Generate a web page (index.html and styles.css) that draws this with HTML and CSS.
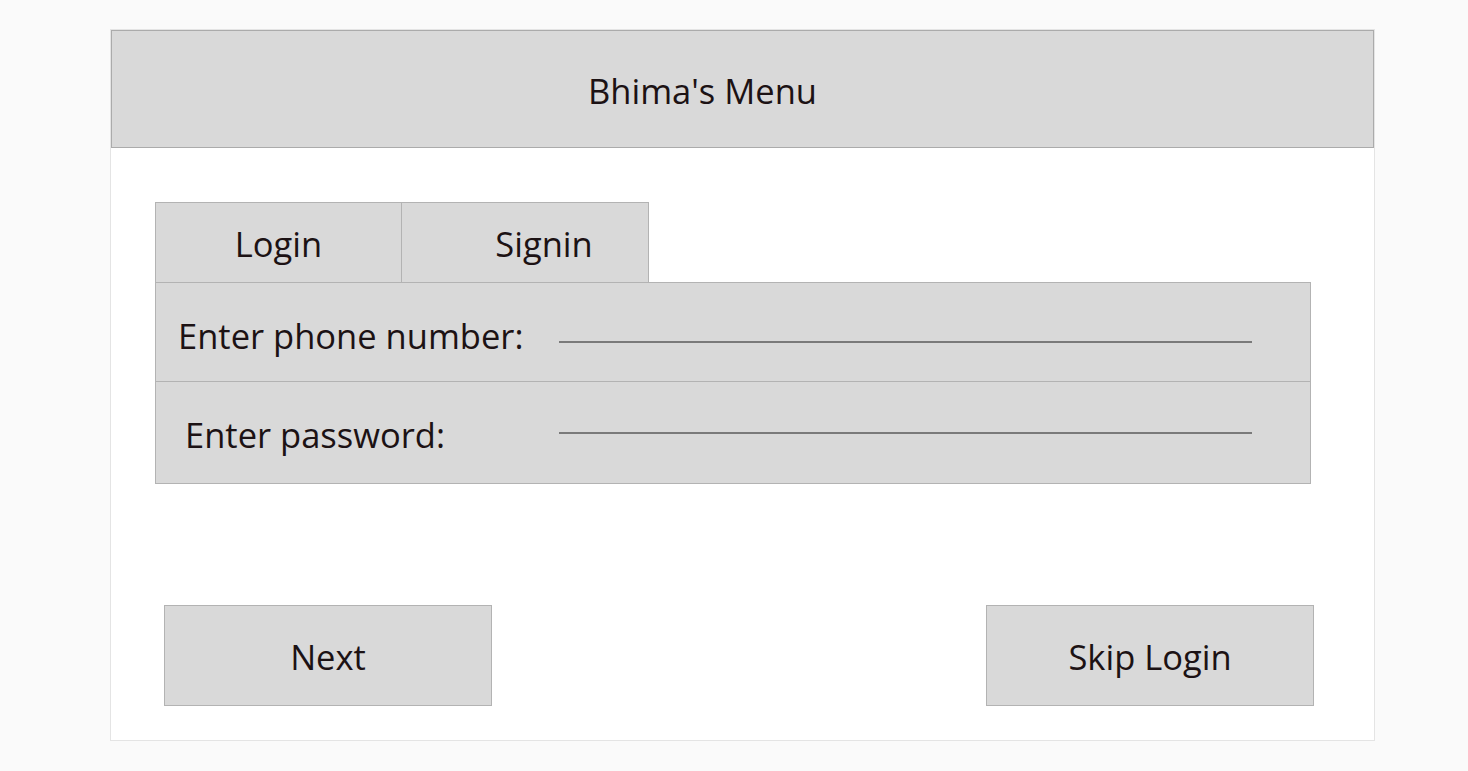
FILE: index.html
```html
<!DOCTYPE html>
<html lang="en">
<head>
<meta charset="utf-8">
<title>Bhima's Menu</title>
<link rel="stylesheet" href="styles.css">
</head>
<body>
<div class="card">
  <div class="header"><span class="title">Bhima's Menu</span></div>
  <div class="content">
    <div class="tabs">
      <div class="tab tab-login">Login</div>
      <div class="tab tab-signin">Signin</div>
    </div>
    <div class="form">
      <div class="row row-phone">
        <span class="label">Enter phone number:</span>
        <span class="line"></span>
      </div>
      <div class="row row-pass">
        <span class="label">Enter password:</span>
        <span class="line"></span>
      </div>
    </div>
    <div class="actions">
      <div class="btn btn-next">Next</div>
      <div class="btn btn-skip">Skip Login</div>
    </div>
  </div>
</div>
</body>
</html>
```

FILE: styles.css
```css
* { box-sizing: border-box; }
html, body { margin: 0; padding: 0; }
body {
  background: #fafafa;
  font-family: "Open Sans", "Noto Sans", sans-serif;
  color: #1c1214;
  padding-top: 29px;
}
.card {
  margin-left: 110px;
  width: 1265px;
  height: 712px;
  background: #ffffff;
  border: 1px solid #e4e4e4;
}
.header {
  height: 118px;
  background: #d9d9d9;
  border: 1px solid #ababab;
  display: flex;
  align-items: center;
  justify-content: center;
  padding-right: 80px;
  padding-top: 2px;
  font-size: 34.5px;
}
.content {
  padding: 54px 0 0 44px;
}
.tabs { display: flex; }
.tab {
  width: 247px;
  height: 80px;
  background: #d9d9d9;
  border: 1px solid #b3b3b3;
  border-bottom: none;
  display: flex;
  align-items: center;
  justify-content: center;
  font-size: 34.5px;
  padding-top: 2px;
}
.tab-signin { margin-left: -1px; width: 248px; padding-left: 38px; }
.form {
  width: 1156px;
  height: 202px;
  background: #d9d9d9;
  border: 1px solid #b3b3b3;
  display: flex;
  flex-direction: column;
}
.row {
  display: flex;
  align-items: center;
  font-size: 34.5px;
}
.row-phone { height: 99px; border-bottom: 1px solid #b3b3b3; padding-left: 22px; }
.row-pass { flex: 1; padding-left: 29px; }
.label { width: 0; white-space: nowrap; }
.row-phone .label { margin-top: 6px; }
.row-pass .label { margin-top: 4px; }
.line {
  margin-left: auto;
  margin-right: 58px;
  width: 693px;
  height: 2px;
  background: #7a7a7a;
}
.row-phone .line { margin-top: 20px; }
.actions {
  margin-top: 121px;
  display: flex;
  justify-content: space-between;
  width: 1159px;
  padding-left: 9px;
}
.btn {
  width: 328px;
  height: 101px;
  background: #d9d9d9;
  border: 1px solid #b3b3b3;
  display: flex;
  align-items: center;
  justify-content: center;
  font-size: 34.5px;
  padding-top: 2px;
}
```
